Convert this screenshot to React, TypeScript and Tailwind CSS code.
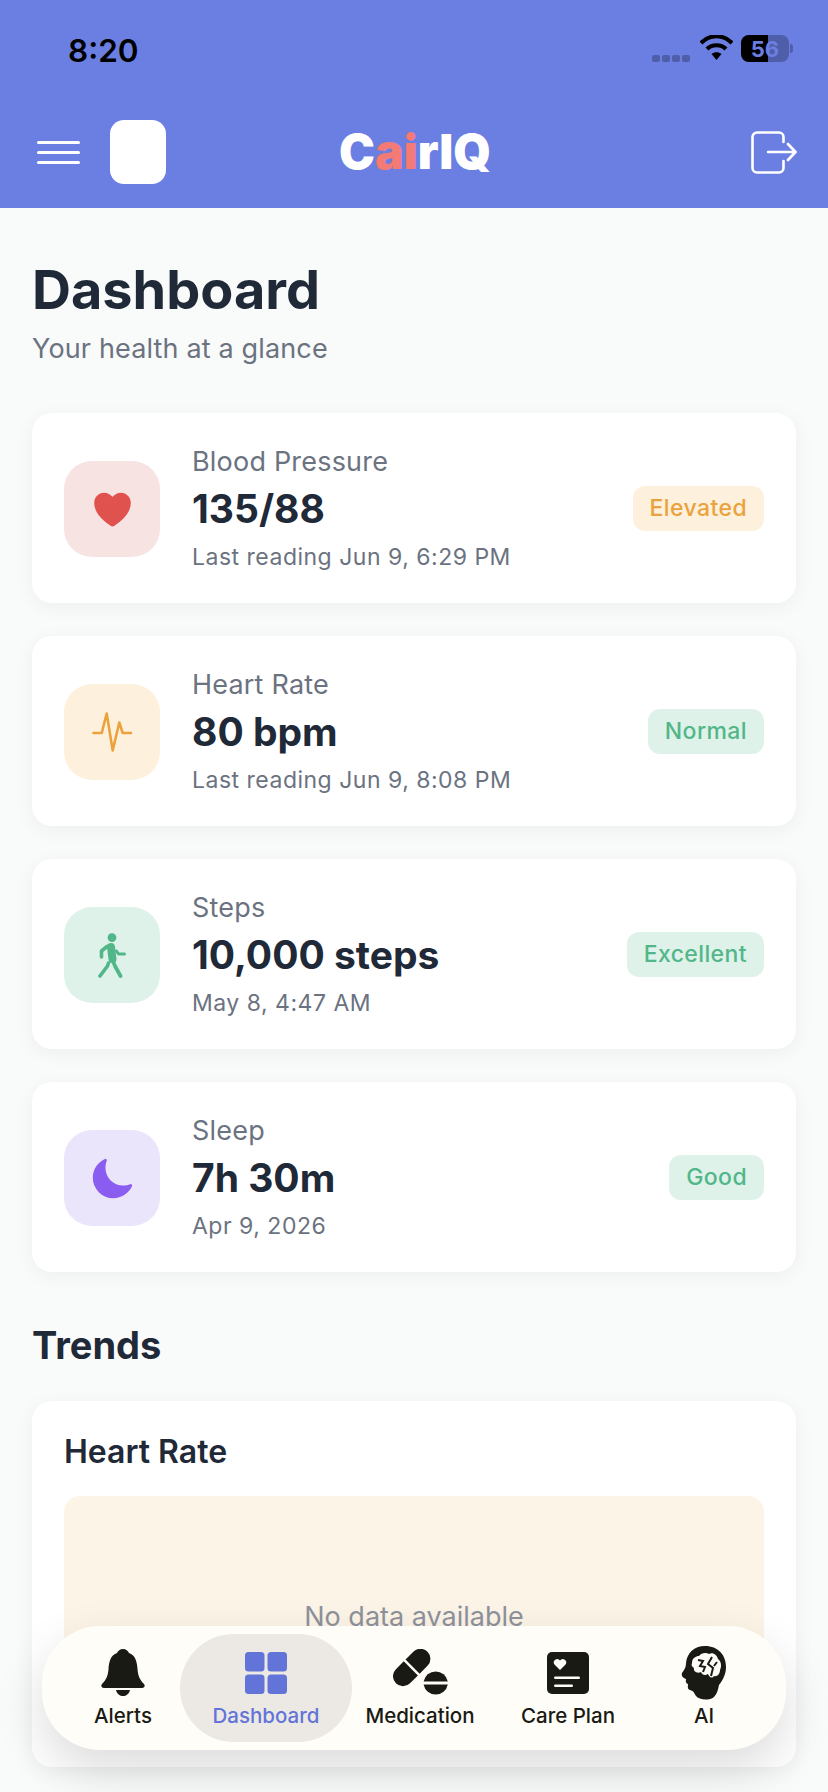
import type { ReactNode } from "react";
import { IoHeart, IoMoon } from "react-icons/io5";

function StatusBar() {
  return (
    <div className="h-[100px] flex items-start justify-between pl-[68px] pr-[35px]">
      <span className="mt-[31px] text-[31.5px] leading-[40px] font-semibold text-black">8:20</span>
      <div className="flex items-start mt-[35px]">
        <div className="flex gap-[2px] mt-[20px] mr-[10px]">
          <span className="w-[8px] h-[7px] rounded-[2px] bg-[#4f5ea8]" />
          <span className="w-[8px] h-[7px] rounded-[2px] bg-[#4f5ea8]" />
          <span className="w-[8px] h-[7px] rounded-[2px] bg-[#4f5ea8]" />
          <span className="w-[8px] h-[7px] rounded-[2px] bg-[#4f5ea8]" />
        </div>
        <svg width="33" height="26" viewBox="0 0 33 26" className="mr-[8px]">
          <path d="M1 8 C10 -1 23 -1 32 8" fill="none" stroke="#000" strokeWidth="4.2" />
          <path d="M7 14 C12 9 21 9 26 14" fill="none" stroke="#000" strokeWidth="4.2" />
          <path d="M11.5 19 L16.5 25 L21.5 19 C18.5 16.5 14.5 16.5 11.5 19Z" fill="#000" />
        </svg>
        <div className="relative w-[48px] h-[27px] rounded-[8px] overflow-hidden bg-[#4f5ea8] flex items-center justify-center">
          <span className="absolute left-0 top-0 bottom-0 w-[27px] bg-black" />
          <span className="relative text-[22px] leading-none font-bold text-[#6b7fe3]">56</span>
        </div>
        <span className="w-[3px] h-[9px] mt-[9px] ml-[1px] rounded-r-[3px] bg-[#4f5ea8]" />
      </div>
    </div>
  );
}

function Header() {
  return (
    <header className="h-[208px] bg-[#6b7fe3] shrink-0">
      <StatusBar />
      <div className="relative flex items-center justify-between h-[64px] mt-[20px] pl-[37px] pr-[31px]">
        <div className="flex items-center gap-[30px]">
          <div className="flex flex-col gap-[7px] w-[43px]">
            <span className="h-[3px] rounded-full bg-white" />
            <span className="h-[3px] rounded-full bg-white" />
            <span className="h-[3px] rounded-full bg-white" />
          </div>
          <div className="w-[56px] h-[64px] rounded-[14px] bg-white" />
        </div>
        <div className="absolute left-[339px] top-[6px] text-[48px] leading-[52px] font-black text-white">
          C<span className="text-[#f47a75]">ai</span>rIQ
        </div>
        <svg width="46" height="43" viewBox="0 0 46 43" fill="none" stroke="#fff" strokeWidth="2.6" strokeLinecap="round" strokeLinejoin="round">
          <path d="M32.5 11 V6 A4.5 4.5 0 0 0 28 1.5 H6 A4.5 4.5 0 0 0 1.5 6 V37 A4.5 4.5 0 0 0 6 41.5 H28 A4.5 4.5 0 0 0 32.5 37 V30" />
          <path d="M17 21 H44 M37 13 L44.5 21 L37 29" />
        </svg>
      </div>
    </header>
  );
}

const pulse = (
  <svg width="40" height="40" viewBox="0 0 40 40" fill="none" stroke="#eba23c" strokeWidth="2.6" strokeLinecap="round" strokeLinejoin="round">
    <path d="M1.5 21 H9.7 L14.7 1.5 L20.7 38.5 L27.3 10.5 L30.7 21 H39" />
  </svg>
);

const walk = (
  <svg width="28" height="45" viewBox="0 0 28 45" fill="none" stroke="#52b788" strokeLinecap="round" strokeLinejoin="round">
    <circle cx="14" cy="4.6" r="4.4" fill="#52b788" stroke="none" />
    <path d="M13 14 L14.5 26" strokeWidth="8" />
    <path d="M9 13.5 L3.5 18 V24" strokeWidth="3.6" />
    <path d="M18.5 18 L20.5 21 H26.5" strokeWidth="3" />
    <path d="M10.5 30 L9.5 33 L2 43" strokeWidth="3.6" />
    <path d="M14.5 27 L17 33 L22.5 43" strokeWidth="3.8" />
  </svg>
);

const metrics = [
  { title: "Blood Pressure", value: "135/88", sub: "Last reading Jun 9, 6:29 PM", badge: "Elevated", badgeBg: "bg-[#fdf0dc]", badgeText: "text-[#eba23c]", iconBg: "bg-[#f8e3e3]", icon: <IoHeart className="w-[45px] h-[45px] text-[#e0524d]" /> },
  { title: "Heart Rate", value: "80 bpm", sub: "Last reading Jun 9, 8:08 PM", badge: "Normal", badgeBg: "bg-[#def2ea]", badgeText: "text-[#52b788]", iconBg: "bg-[#fdf1de]", icon: pulse },
  { title: "Steps", value: "10,000 steps", sub: "May 8, 4:47 AM", badge: "Excellent", badgeBg: "bg-[#def2ea]", badgeText: "text-[#52b788]", iconBg: "bg-[#def2ea]", icon: walk },
  { title: "Sleep", value: "7h 30m", sub: "Apr 9, 2026", badge: "Good", badgeBg: "bg-[#def2ea]", badgeText: "text-[#52b788]", iconBg: "bg-[#ebe5fb]", icon: <IoMoon className="w-[45px] h-[45px] text-[#8b5cf0]" /> },
];

function MetricCard({ m }: { m: (typeof metrics)[number] }) {
  return (
    <div className="h-[190px] rounded-[20px] bg-white shadow-[0_4px_20px_rgba(0,0,0,0.05)] flex items-center pl-[32px] pr-[32px] pt-[2px]">
      <div className={`w-[96px] h-[96px] rounded-[28px] flex items-center justify-center shrink-0 ${m.iconBg}`}>{m.icon}</div>
      <div className="ml-[32px] flex-1 -mt-[1px]">
        <div className="text-[27px] leading-[32px] tracking-[0.2px] text-[#6b7280]">{m.title}</div>
        <div className="text-[39px] leading-[46px] mt-[8px] font-bold text-[#1f2937]">{m.value}</div>
        <div className="text-[23px] leading-[28px] mt-[11px] text-[#6b7280] tracking-[0.5px]">{m.sub}</div>
      </div>
      <div className={`h-[45px] px-[17px] -mt-[2px] rounded-[12px] flex items-center text-[23px] tracking-[0.4px] font-medium ${m.badgeBg} ${m.badgeText}`}>{m.badge}</div>
    </div>
  );
}

function NavItem({ label, icon, w, active }: { label: string; icon: ReactNode; w: string; active?: boolean }) {
  return (
    <div className={`flex flex-col items-center justify-center shrink-0 h-[108px] ${w} ${active ? "rounded-[54px] bg-[#ece9e4]" : ""}`}>
      <div className="h-[48px] w-[60px] flex items-center justify-center">{icon}</div>
      <span className={`mt-[7px] text-[20.5px] leading-[24px] font-medium ${active ? "text-[#6374d8]" : "text-[#1a1a14]"}`}>{label}</span>
    </div>
  );
}

function App() {
  return (
    <div className="relative w-[828px] h-[1792px] overflow-hidden flex flex-col bg-[#f9fafa] font-['Inter',sans-serif]">
      <Header />
      <main className="px-[32px]">
        <h1 className="mt-[50px] text-[54px] leading-[64px] font-bold text-[#1f2937]">Dashboard</h1>
        <p className="mt-[11px] text-[27px] leading-[32px] tracking-[0.15px] text-[#6b7280]">Your health at a glance</p>
        <div className="mt-[48px] flex flex-col gap-[33px]">
          {metrics.map((m) => (
            <MetricCard key={m.title} m={m} />
          ))}
        </div>
        <h2 className="mt-[50px] text-[38px] leading-[46px] font-bold text-[#1f2937]">Trends</h2>
        <section className="mt-[33px] h-[366px] rounded-[20px] bg-white shadow-[0_4px_20px_rgba(0,0,0,0.05)] px-[32px] pt-[32px]">
          <h3 className="text-[32px] leading-[38px] font-semibold text-[#1f2937]">Heart Rate</h3>
          <div className="mt-[25px] h-[240px] pt-[2px] rounded-[16px] bg-[#fdf4e8] flex items-center justify-center text-[27px] text-[#8e929b]">No data available</div>
        </section>
      </main>
      <nav className="absolute left-[42px] top-[1626px] w-[744px] h-[124px] rounded-[58px] bg-[#fffdf8] shadow-[0_20px_50px_rgba(0,0,0,0.14)] flex items-center pl-[27px]">
        <NavItem
          w="w-[108px] mr-[3px]"
          label="Alerts"
          icon={
            <svg width="44" height="47" viewBox="0 0 44 47" fill="#1a1a14">
              <path d="M22 0 C25 0 27 2 28 4 C34 6 36 12 36.5 20 C37 27 39 31 43 35 C44.5 37 43.5 39 41 39 H3 C0.5 39 -0.5 37 1 35 C5 31 7 27 7.5 20 C8 12 10 6 16 4 C17 2 19 0 22 0Z" />
              <path d="M15 41 H29 C28 45 25 47 22 47 C19 47 16 45 15 41Z" />
            </svg>
          }
        />
        <NavItem
          w="w-[172px]"
          active
          label="Dashboard"
          icon={
            <svg width="42" height="42" viewBox="0 0 42 42" fill="#6374d8">
              <rect x="0" y="0" width="19.5" height="19.5" rx="3.5" />
              <rect x="22.5" y="0" width="19.5" height="19.5" rx="3.5" />
              <rect x="0" y="22.5" width="19.5" height="19.5" rx="3.5" />
              <rect x="22.5" y="22.5" width="19.5" height="19.5" rx="3.5" />
            </svg>
          }
        />
        <NavItem
          w="w-[136px]"
          label="Medication"
          icon={
            <svg width="55" height="47" viewBox="0 0 55 47" fill="#1a1a14">
              <g transform="translate(18.7 18.5) rotate(-45)">
                <path d="M-1.25 -10 H-12.35 A10 10 0 0 0 -12.35 10 H-1.25 Z" />
                <path d="M1.25 -10 H12.35 A10 10 0 0 1 12.35 10 H1.25 Z" />
              </g>
              <path d="M30.6 32.6 A12.3 12.3 0 0 1 54.8 32.6 Z" />
              <path d="M30.6 35.4 A12.3 12.3 0 0 0 54.8 35.4 Z" />
            </svg>
          }
        />
        <NavItem
          w="w-[160px]"
          label="Care Plan"
          icon={
            <svg width="42" height="42" viewBox="0 0 42 42">
              <rect width="42" height="42" rx="5" fill="#1a1a14" />
              <path d="M13 18 L7.5 12.5 A3.4 3.4 0 0 1 13 8.5 A3.4 3.4 0 0 1 18.5 12.5 Z" fill="#fffdf8" />
              <rect x="7" y="24.5" width="26" height="2.6" rx="1.3" fill="#fffdf8" />
              <rect x="7" y="32.5" width="19" height="2.6" rx="1.3" fill="#fffdf8" />
            </svg>
          }
        />
        <NavItem
          w="w-[112px]"
          label="AI"
          icon={
            <svg width="46" height="54" viewBox="0 0 46 54">
              <path d="M24 0 C37 0 45 9 45 21 C45 29 41 35 38 39 C37 44 36 48 33 51 C28 55 18 54 15 50 C13 47 13 45 9 44 C6 43 7 40 7 38 C4 37 5 34 5 33 C2 32 0 30 1 27 C3 24 5 22 5 17 C6 7 13 0 24 0Z" fill="#1a1a14" />
              <path d="M11 17 C11 12 15 10 18 10 C20 7 25 6 28 8 C32 6 36 9 37 13 C40 15 41 20 39 24 C39 28 36 31 33 30 C31 33 28 31 27 28 C24 30 21 29 20 26 C16 28 12 25 13 22 C11 21 10 19 11 17Z" fill="#fffdf8" />
              <path d="M17 14 L22 15 L19 20 L24 21 L22 26 M31 11 L27 18 L32 22 L30 30 M36 16 L33 20" fill="none" stroke="#1a1a14" strokeWidth="2" />
            </svg>
          }
        />
      </nav>
    </div>
  );
}

export default App;
